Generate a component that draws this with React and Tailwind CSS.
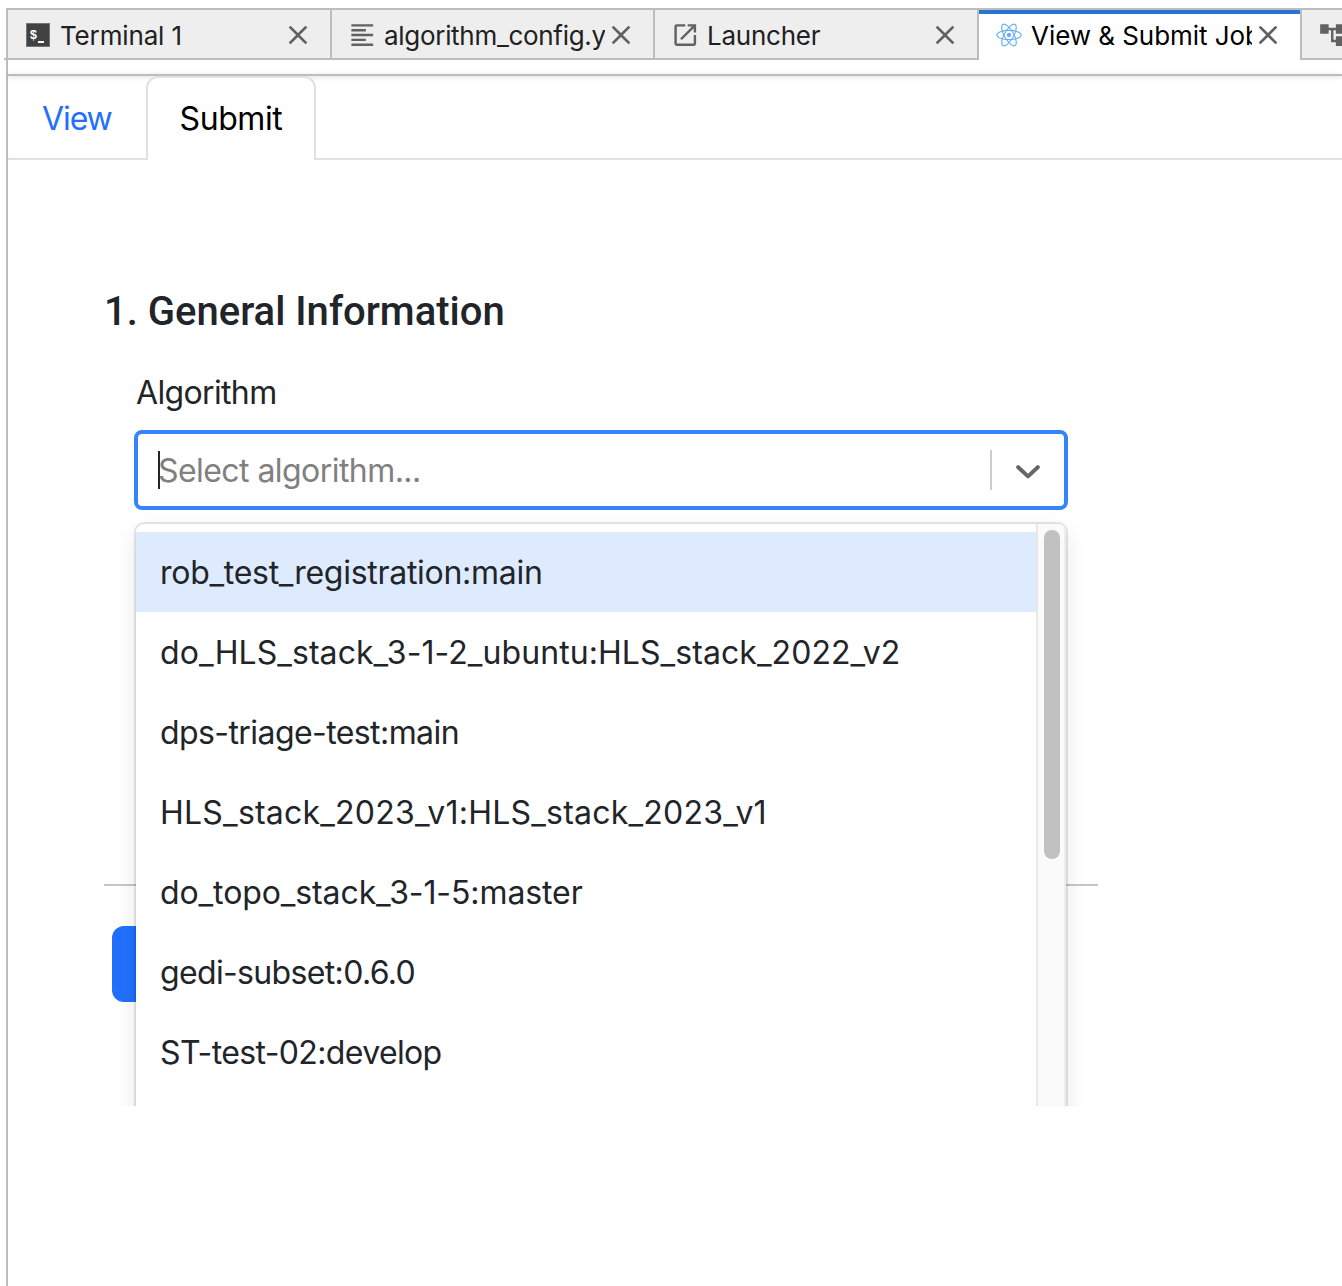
import React from "react";

const TerminalIcon = () => (
  <span className="relative block h-6 w-6 border border-[#757575] bg-[#424242] font-['Liberation_Sans'] text-white">
    <span className="absolute left-[3px] top-[4px] text-[12.5px] font-bold leading-[14px]">$</span>
    <span className="absolute left-[11px] top-[17px] h-[1.5px] w-[6px] bg-white" />
  </span>
);

const Material = ({ d }) => (
  <svg viewBox="0 0 24 24" className="h-[29px] w-[29px] shrink-0 -translate-x-[0.25px] -translate-y-[0.5px] fill-[#616161]">
    <path d={d} />
  </svg>
);

const TextIcon = () => (
  <Material d="M15 15H3v2h12v-2zm0-8H3v2h12V7zM3 13h18v-2H3v2zm0 8h18v-2H3v2zM3 3v2h18V3H3z" />
);

const LaunchIcon = () => (
  <Material d="M19 19H5V5h7V3H5a2 2 0 0 0-2 2v14a2 2 0 0 0 2 2h14c1.1 0 2-.9 2-2v-7h-2v7zM14 3v2h3.59l-9.83 9.83 1.41 1.41L19 6.41V10h2V3h-7z" />
);

const TreeIcon = () => (
  <Material d="M22 11V3h-7v3H9V3H2v8h7V8h2v10h4v3h7v-8h-7v3h-2V8h2v3z" />
);

const AtomIcon = () => (
  <svg viewBox="-14 -14 28 28" className="h-7 w-7 shrink-0 -translate-y-px fill-none stroke-[#64b0f2]" strokeWidth="1.1">
    <ellipse rx="12.2" ry="4.6" />
    <ellipse rx="12.2" ry="4.6" transform="rotate(60)" />
    <ellipse rx="12.2" ry="4.6" transform="rotate(120)" />
    <circle r="2.2" className="fill-[#64b0f2] stroke-none" />
  </svg>
);

const CloseIcon = () => (
  <svg viewBox="0 0 24 24" className="h-8 w-8 shrink-0 fill-[#616161]">
    <path d="M19 6.41 17.59 5 12 10.59 6.41 5 5 6.41 10.59 12 5 17.59 6.41 19 12 13.41 17.59 19 19 17.59 13.41 12z" />
  </svg>
);

const tabs = [
  { title: "Terminal 1", Icon: TerminalIcon, width: "w-[324px]", text: "pl-[1px] tracking-[-0.15px]", close: "ml-px" },
  { title: "algorithm_config.yml", Icon: TextIcon, width: "w-[323px]", text: "pl-[1px] tracking-[-0.3px]", close: "" },
  { title: "Launcher", Icon: LaunchIcon, width: "w-[324px]", text: "pl-[1px] tracking-[-0.25px]", close: "ml-px" },
  { title: "View & Submit Jobs", Icon: AtomIcon, width: "w-[321px]", text: "-translate-y-px pl-[1px] tracking-[-0.05px]", close: "-translate-y-px", active: true },
];

const options = [
  ["rob_test_registration:main", "bg-[#deebff] tracking-[-0.28px]"],
  ["do_HLS_stack_3-1-2_ubuntu:HLS_stack_2022_v2", "tracking-[0.07px]"],
  ["dps-triage-test:main", "tracking-[-0.58px]"],
  ["HLS_stack_2023_v1:HLS_stack_2023_v1", "tracking-[0.22px]"],
  ["do_topo_stack_3-1-5:master", "tracking-[-0.1px]"],
  ["gedi-subset:0.6.0", "tracking-[-0.65px]"],
  ["ST-test-02:develop", "tracking-[-0.63px]"],
  ["", ""],
];

function DockTab({ title, Icon, width, text, close, active }) {
  return (
    <div
      className={`flex h-[50px] shrink-0 items-center ${width} ${
        active
          ? "border-t-4 border-[#2874d0] bg-white pb-[4px] text-black"
          : "border-b-2 border-r-2 border-[#bdbdbd] bg-[#eeeeee] text-[#212121]"
      }`}
    >
      <span className="ml-[15px] mt-[2px] flex w-[30px] shrink-0 justify-center">
        <Icon />
      </span>
      <span className={`ml-[6px] mt-[3px] w-[222px] shrink-0 overflow-hidden whitespace-nowrap text-[26px] leading-[34px] ${text}`}>
        {title}
      </span>
      <span className={`mt-[2px] shrink-0 ${close}`}>
        <CloseIcon />
      </span>
    </div>
  );
}

export default function App() {
  return (
    <div className="flex h-[1286px] w-[1342px] overflow-hidden bg-white font-['Inter',sans-serif]">
      <div className="mt-[58px] h-[2px] w-[2px] shrink-0 translate-x-[4px] bg-[#bdbdbd]" />
      <div className="ml-[4px] mt-[8px] flex w-[1336px] shrink-0 flex-col border-l-2 border-t-2 border-[#bdbdbd]">
        <div className="flex h-[64px] shrink-0 overflow-hidden">
          {tabs.map((t) => (
            <DockTab key={t.title} {...t} />
          ))}
          <div className="flex h-[50px] w-[60px] shrink-0 items-center border-b-2 border-l-2 border-[#bdbdbd] bg-[#eeeeee]">
            <span className="ml-[16px] mt-[2px]">
              <TreeIcon />
            </span>
          </div>
        </div>

        <div className="h-[2px] shrink-0 bg-[#bdbdbd] shadow-[0_1px_4px_rgba(0,0,0,0.2)]" />

        <div className="flex h-[84px] shrink-0 text-[32px] leading-[86px]">
          <div className="w-[138px] border-b-2 border-[#dee2e6] pl-[34px] tracking-[-1.1px] text-[#2170fd]">View</div>
          <div className="w-[170px] rounded-t-[12px] border-x-2 border-t-2 border-[#dee2e6] bg-white pl-[31.5px] leading-[82px] tracking-[-0.4px] text-black">
            Submit
          </div>
          <div className="grow border-b-2 border-[#dee2e6]" />
        </div>

        <div className="relative h-[946px] shrink-0 overflow-hidden text-[#212529]">
          <h2 className="ml-[96px] mt-[128px] font-['Roboto'] text-[40px] font-medium leading-[48px]">
            1. General Information
          </h2>
          <div className="ml-[126px] mt-[37px] w-[934px]">
            <label className="block pl-[2px] text-[32px] leading-[40px] tracking-[-0.65px]">Algorithm</label>
            <div className="relative mt-[17px]">
              <div className="flex h-[80px] items-center rounded-[8px] border-4 border-[#3584fb] bg-white">
                <span className="ml-[20px] h-[38px] w-[2px] bg-[#212529]" />
                <span className="-ml-[2px] mt-[2px] grow text-[32px] leading-[40px] tracking-[-0.56px] text-[#808080]">
                  Select algorithm...
                </span>
                <span className="h-[40px] w-[2px] bg-[#cccccc]" />
                <span className="mt-[3px] flex w-[72px] justify-center">
                  <svg viewBox="0 0 24 14" className="h-[14px] w-[24px] fill-none stroke-[#666666]" strokeWidth="4" strokeLinecap="round" strokeLinejoin="round">
                    <path d="M2.2 2.2 12 11.4 21.8 2.2" />
                  </svg>
                </span>
              </div>

              <div className="absolute left-[2px] top-[94px] z-10 flex h-[608px] w-[930px] overflow-hidden rounded-[8px] bg-white shadow-[0_0_0_2px_rgba(0,0,0,0.1),0_8px_22px_rgba(0,0,0,0.1)]">
                <div className="w-[900px] pt-[8px]">
                  {options.map(([name, cls], i) => (
                    <div key={i} className={`h-[80px] whitespace-nowrap pl-[24px] text-[32px] leading-[82px] ${cls}`}>
                      {name}
                    </div>
                  ))}
                </div>
                <div className="w-[30px] border-l-2 border-r-2 border-l-[#e8e8e8] border-r-[#ededed] bg-[#fafafa] pl-[6px] pt-[6px]">
                  <div className="h-[329px] w-[16px] rounded-full bg-[#c1c1c1]" />
                </div>
              </div>
            </div>
          </div>
          <hr className="ml-[96px] mt-[374px] h-[2px] w-[994px] border-0 bg-[#c6c6c6]" />
          <button className="ml-[104px] mt-[40px] block h-[76px] w-[220px] rounded-[12px] bg-[#2170fd]" />
        </div>
      </div>
    </div>
  );
}
